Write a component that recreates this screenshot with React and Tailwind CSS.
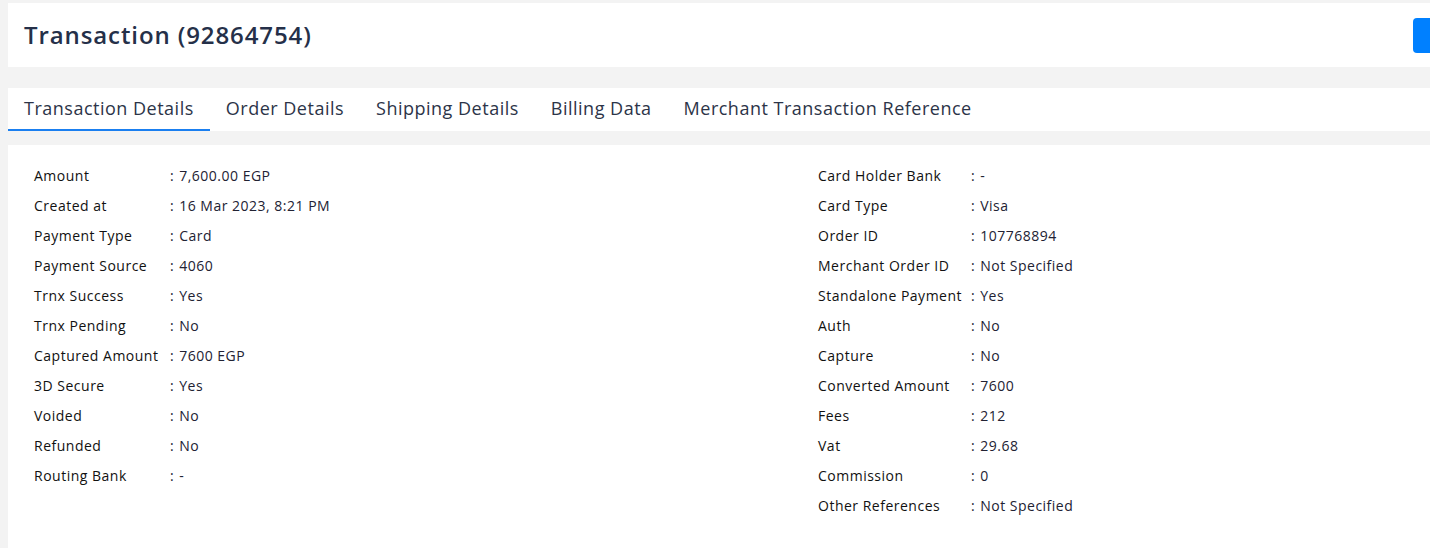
import React, { useState } from "react";

const tabs = [
  "Transaction Details",
  "Order Details",
  "Shipping Details",
  "Billing Data",
  "Merchant Transaction Reference",
];

const leftRows = [
  ["Amount", "7,600.00 EGP"],
  ["Created at", "16 Mar 2023, 8:21 PM"],
  ["Payment Type", "Card"],
  ["Payment Source", "4060"],
  ["Trnx Success", "Yes"],
  ["Trnx Pending", "No"],
  ["Captured Amount", "7600 EGP"],
  ["3D Secure", "Yes"],
  ["Voided", "No"],
  ["Refunded", "No"],
  ["Routing Bank", "-"],
];

const rightRows = [
  ["Card Holder Bank", "-"],
  ["Card Type", "Visa"],
  ["Order ID", "107768894"],
  ["Merchant Order ID", "Not Specified"],
  ["Standalone Payment", "Yes"],
  ["Auth", "No"],
  ["Capture", "No"],
  ["Converted Amount", "7600"],
  ["Fees", "212"],
  ["Vat", "29.68"],
  ["Commission", "0"],
  ["Other References", "Not Specified"],
];

const DetailList = ({ rows, labelWidth }) => (
  <div className="flex flex-col">
    {rows.map(([label, value]) => (
      <div key={label} className="flex items-center h-[30px] text-[14px] tracking-[0.5px]">
        <span className={`${labelWidth} shrink-0 text-[#111111]`}>{label}</span>
        <span className="text-[#222233]">
          <span className="mr-[5px]">:</span>
          {value}
        </span>
      </div>
    ))}
  </div>
);

export default function App() {
  const [active, setActive] = useState(0);

  return (
    <div
      className="min-h-[548px] bg-[#f3f3f3] pl-2 pt-[3px] overflow-hidden"
      style={{ fontFamily: "'Open Sans', 'Liberation Sans', sans-serif" }}
    >
      {/* header */}
      <div className="h-16 bg-white flex items-center justify-between pl-4">
        <h1 className="text-[24px] font-semibold text-[#253049] tracking-[0.9px]">
          Transaction (92864754)
        </h1>
        <button className="w-6 h-[35px] bg-[#0080ff] rounded-l-[4px] translate-x-[7px]" />
      </div>

      {/* tabs */}
      <div className="mt-[21px] h-[43px] bg-white flex">
        {tabs.map((t, i) => (
          <button
            key={t}
            onClick={() => setActive(i)}
            className={`px-4 h-full text-[18px] tracking-[0.5px] text-[#2c3448] border-b-2 ${
              active === i ? "border-[#1a7ff0]" : "border-transparent"
            }`}
          >
            {t}
          </button>
        ))}
      </div>

      {/* details */}
      <div className="mt-[14px] bg-white min-h-[403px] pt-[15px] px-[26px] grid grid-cols-[784px_1fr]">
        <DetailList rows={leftRows} labelWidth="w-[136px]" />
        <DetailList rows={rightRows} labelWidth="w-[153px]" />
      </div>
    </div>
  );
}
